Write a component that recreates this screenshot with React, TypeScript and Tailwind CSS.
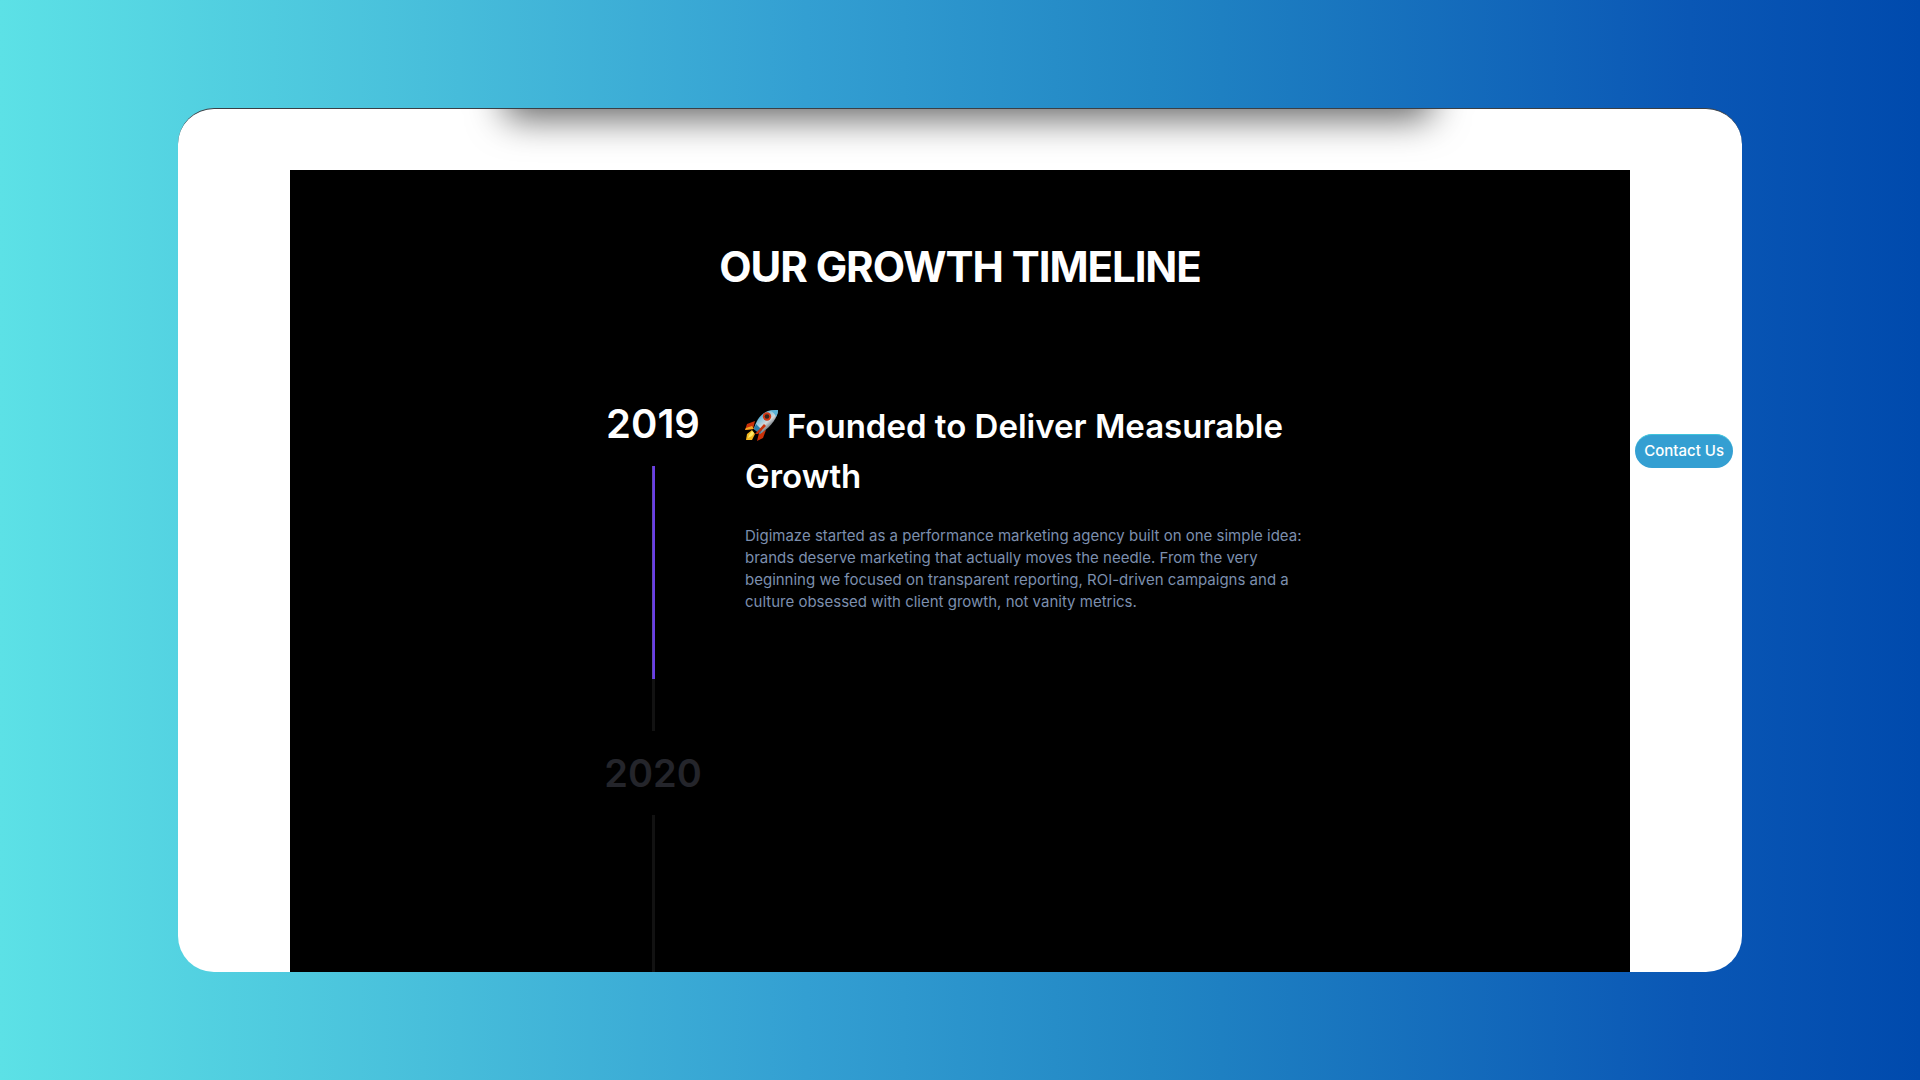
const milestones = [
  {
    year: "2019",
    active: true,
    title: "Founded to Deliver Measurable Growth",
    body: "Digimaze started as a performance marketing agency built on one simple idea: brands deserve marketing that actually moves the needle. From the very beginning we focused on transparent reporting, ROI-driven campaigns and a culture obsessed with client growth, not vanity metrics.",
  },
  { year: "2020", active: false, title: "", body: "" },
];

function RocketIcon() {
  return (
    <svg viewBox="0 0 34 32" aria-hidden="true" className="mr-2 -mt-2 inline-block h-8 w-[34px]">
      <defs>
        <linearGradient id="hull" x1="12" y1="6" x2="24" y2="20" gradientUnits="userSpaceOnUse">
          <stop offset="0" stopColor="#2f9fd0" />
          <stop offset="0.35" stopColor="#8fc6dd" />
          <stop offset="0.65" stopColor="#d3d7da" />
          <stop offset="1" stopColor="#5d666d" />
        </linearGradient>
      </defs>
      <path d="M10 12 2 15 0 21 8 20Z" fill="#c93108" />
      <path d="M14 24 12 32 18 29 21 21Z" fill="#c93108" />
      <path d="M0 21 1 19 7 17 9 20Z" fill="#f5a623" />
      <path d="M7 21 2 25 1 31 7 31 10 25Z" fill="#f2b51f" />
      <path d="M7 22 4 26 3 29 7 27 9 24Z" fill="#fdec68" />
      <path d="M9 20C11 11 17 3 25 1.500L33 1C33 8 26 18 15 25Z" fill="url(#hull)" />
      <path d="M9 20 11 15 17 21 15 25Z" fill="#277eac" />
      <path d="M25 1.500 33 1C33 4 32 6 31 8C30 5 28 3 25 1.500Z" fill="#5bb3d8" />
      <circle cx="22" cy="7.500" r="4.200" fill="#d33a16" />
      <circle cx="22" cy="7.500" r="2.300" fill="#34251f" />
      <path d="M19 15 10 25 13 25 21 17Z" fill="#c93108" />
    </svg>
  );
}

export default function App() {
  return (
    <div className="flex min-h-screen flex-col bg-[linear-gradient(to_right,#5ce1e6,#48bfdb_22%,#339fd2_42%,#2186c4_60%,#0a57b5_88%,#004aad)] px-[178px] py-[108px] font-['Inter',sans-serif]">
      <main className="relative flex flex-1 flex-col overflow-hidden rounded-[36px] border-t border-[#3a3f45] bg-white">
        {/* bottom shadow of the nav bar that is scrolled out of view */}
        <div className="flex h-[61px] justify-center pl-4">
          <div className="-mt-16 h-16 w-[60%] rounded-xl bg-black shadow-[0_10px_36px_rgba(0,0,0,0.6)]" />
        </div>

        <section className="mx-28 flex flex-1 flex-col bg-black pt-16 text-white">
          <h2 className="text-center text-[42px] leading-[66px] font-bold tracking-tight">
            OUR GROWTH TIMELINE
          </h2>

          <ol className="mx-auto mt-[94px] flex w-full max-w-[718px] flex-1 flex-col">
            {milestones.map((item) => (
              <li key={item.year} className={item.active ? "flex gap-10" : "flex flex-1 gap-10"}>
                <div className="flex w-[104px] shrink-0 flex-col items-center">
                  <h3
                    className={
                      item.active
                        ? "text-[40px] leading-[60px] font-semibold"
                        : "text-[38px] leading-[60px] font-semibold text-[#24252b]"
                    }
                  >
                    {item.year}
                  </h3>
                  {item.active ? (
                    <div className="my-3 flex h-[265px] w-[3px] flex-col bg-[#121212]">
                      <div className="h-[213px] border-l border-[#5f4bb0] bg-[#6a3de8]" />
                    </div>
                  ) : (
                    <div className="mt-3 w-[3px] flex-1 bg-[#121212]" />
                  )}
                </div>
                {item.active && (
                  <div className="min-w-0 flex-1">
                    <h4 className="mt-[7px] text-[33px] leading-[50px] font-semibold">
                      <RocketIcon />
                      {item.title}
                    </h4>
                    <p className="mt-6 max-w-[560px] text-[15px] leading-[22px] text-[#7c8fae]">{item.body}</p>
                  </div>
                )}
              </li>
            ))}
          </ol>
        </section>

        <a
          href="#contact"
          className="absolute top-[325px] right-[9px] rounded-full border-t border-[#3fc4dc] bg-[#349fd2] px-[9px] pt-1 pb-[5px] text-[15px] leading-6 font-medium text-white"
        >
          Contact Us
        </a>
      </main>
    </div>
  );
}
